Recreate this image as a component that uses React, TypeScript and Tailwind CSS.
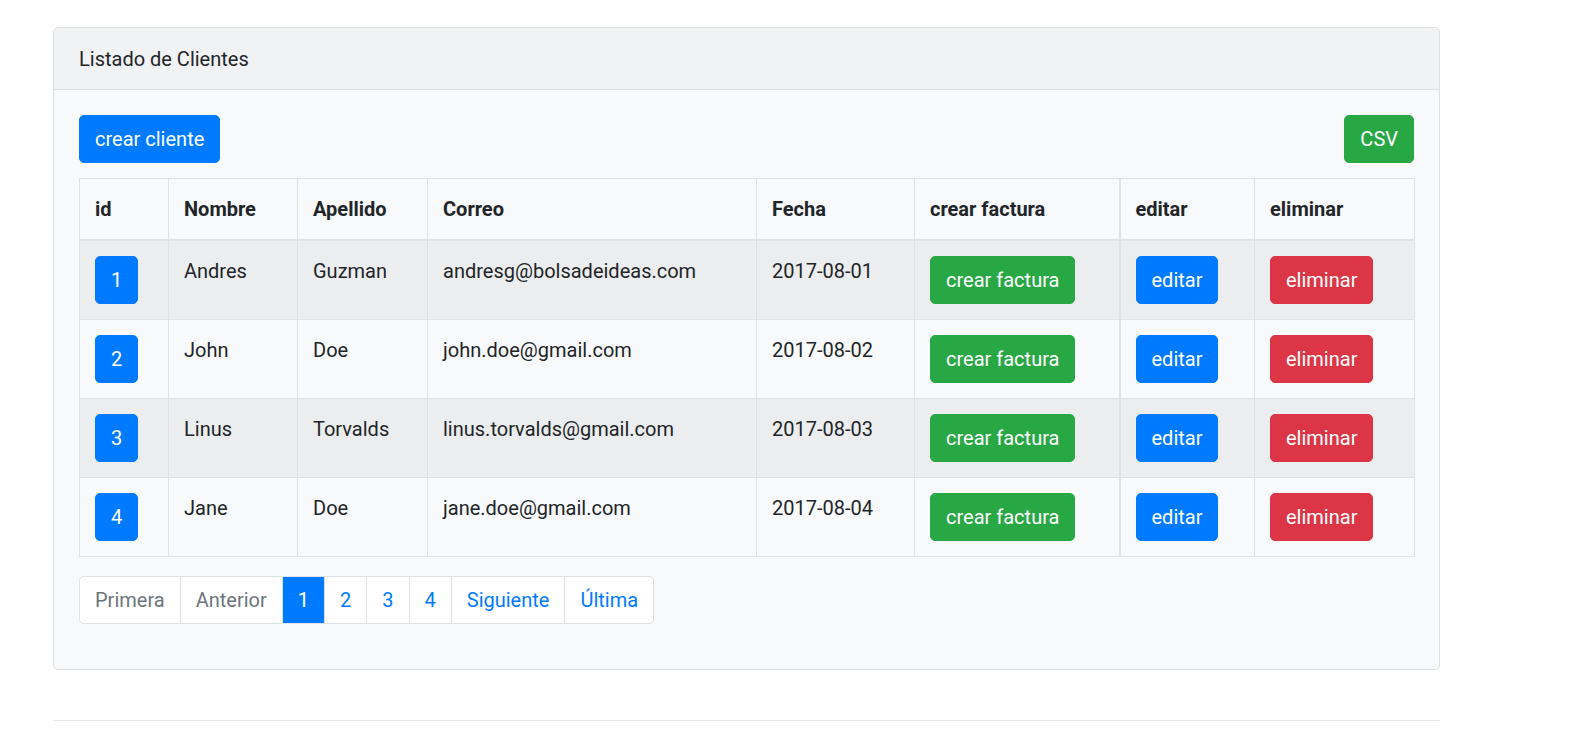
import clsx from 'clsx'

const clientes = [
  { id: 1, nombre: 'Andres', apellido: 'Guzman', email: 'andresg@bolsadeideas.com', fecha: '2017-08-01' },
  { id: 2, nombre: 'John', apellido: 'Doe', email: 'john.doe@gmail.com', fecha: '2017-08-02' },
  { id: 3, nombre: 'Linus', apellido: 'Torvalds', email: 'linus.torvalds@gmail.com', fecha: '2017-08-03' },
  { id: 4, nombre: 'Jane', apellido: 'Doe', email: 'jane.doe@gmail.com', fecha: '2017-08-04' },
]

const columnas = [
  { label: 'id', w: 'w-[89px]' },
  { label: 'Nombre', w: 'w-[129px]' },
  { label: 'Apellido', w: 'w-[130px]' },
  { label: 'Correo', w: 'w-[329px]' },
  { label: 'Fecha', w: 'w-[158px]' },
  { label: 'crear factura', w: 'w-[205px]' },
  { label: 'editar', w: 'w-[135px]' },
  { label: 'eliminar', w: 'w-[160px]' },
]

function Btn({ color, children }: { color: 'blue' | 'green' | 'red'; children: React.ReactNode }) {
  return (
    <button
      className={clsx(
        'h-[48px] px-[15px] border rounded-[5px] text-white text-[20px] leading-[30px] whitespace-nowrap',
        color === 'blue' && 'bg-[#007bff] border-[#007bff]',
        color === 'green' && 'bg-[#28a745] border-[#28a745]',
        color === 'red' && 'bg-[#dc3545] border-[#dc3545]',
      )}
    >
      {children}
    </button>
  )
}

const paginas = [
  { label: 'Primera', tipo: 'disabled' },
  { label: 'Anterior', tipo: 'disabled' },
  { label: '1', tipo: 'active' },
  { label: '2', tipo: 'link' },
  { label: '3', tipo: 'link' },
  { label: '4', tipo: 'link' },
  { label: 'Siguiente', tipo: 'link' },
  { label: 'Última', tipo: 'link' },
]

export default function App() {
  const cell = 'border border-[#dee2e6] px-[15px] py-[15px] align-top text-left'

  return (
    <div className="min-h-screen bg-white font-['Roboto',sans-serif] text-[20px] leading-[30px] text-[#212529]">
      <div className="ml-[53px] w-[1387px] pt-[27px]">
        <div className="rounded-[5px] border border-[#dfdfdf] bg-[#f8f9fa] overflow-hidden">
          <div className="h-[62px] border-b border-[#dfdfdf] bg-[#f1f2f3] px-[25px] py-[16px]">
            Listado de Clientes
          </div>
          <div className="p-[25px]">
            <div className="flex justify-between">
              <Btn color="blue">crear cliente</Btn>
              <Btn color="green">CSV</Btn>
            </div>
            <table className="mt-[15px] w-full table-fixed border-collapse">
              <colgroup>
                {columnas.map(c => (
                  <col key={c.label} className={c.w} />
                ))}
              </colgroup>
              <thead>
                <tr>
                  {columnas.map(c => (
                    <th
                      key={c.label}
                      className={clsx(cell, 'font-bold border-b-2', c.label === 'editar' && 'border-l-2')}
                    >
                      {c.label}
                    </th>
                  ))}
                </tr>
              </thead>
              <tbody>
                {clientes.map((cliente, i) => (
                  <tr key={cliente.id} className={i % 2 === 0 ? 'bg-[#ecedee]' : ''}>
                    <td className={cell}>
                      <Btn color="blue">{cliente.id}</Btn>
                    </td>
                    <td className={cell}>{cliente.nombre}</td>
                    <td className={cell}>{cliente.apellido}</td>
                    <td className={cell}>{cliente.email}</td>
                    <td className={cell}>{cliente.fecha}</td>
                    <td className={cell}>
                      <Btn color="green">crear factura</Btn>
                    </td>
                    <td className={clsx(cell, 'border-l-2')}>
                      <Btn color="blue">editar</Btn>
                    </td>
                    <td className={cell}>
                      <Btn color="red">eliminar</Btn>
                    </td>
                  </tr>
                ))}
              </tbody>
            </table>
            <ul className="mt-[19px] mb-[20px] flex">
              {paginas.map((p, i) => (
                <li
                  key={p.label}
                  className={clsx(
                    'h-[48px] px-[15px] flex items-center border border-[#dee2e6] leading-[25px]',
                    i > 0 && '-ml-px',
                    i === 0 && 'rounded-l-[5px]',
                    i === paginas.length - 1 && 'rounded-r-[5px]',
                    p.tipo === 'disabled' && 'bg-white text-[#6c757d]',
                    p.tipo === 'active' && 'bg-[#007bff] border-[#007bff] text-white z-10',
                    p.tipo === 'link' && 'bg-white text-[#007bff]',
                  )}
                >
                  {p.label}
                </li>
              ))}
            </ul>
          </div>
        </div>
        <hr className="mt-[50px] border-t border-[#e6e6e6]" />
      </div>
    </div>
  )
}
